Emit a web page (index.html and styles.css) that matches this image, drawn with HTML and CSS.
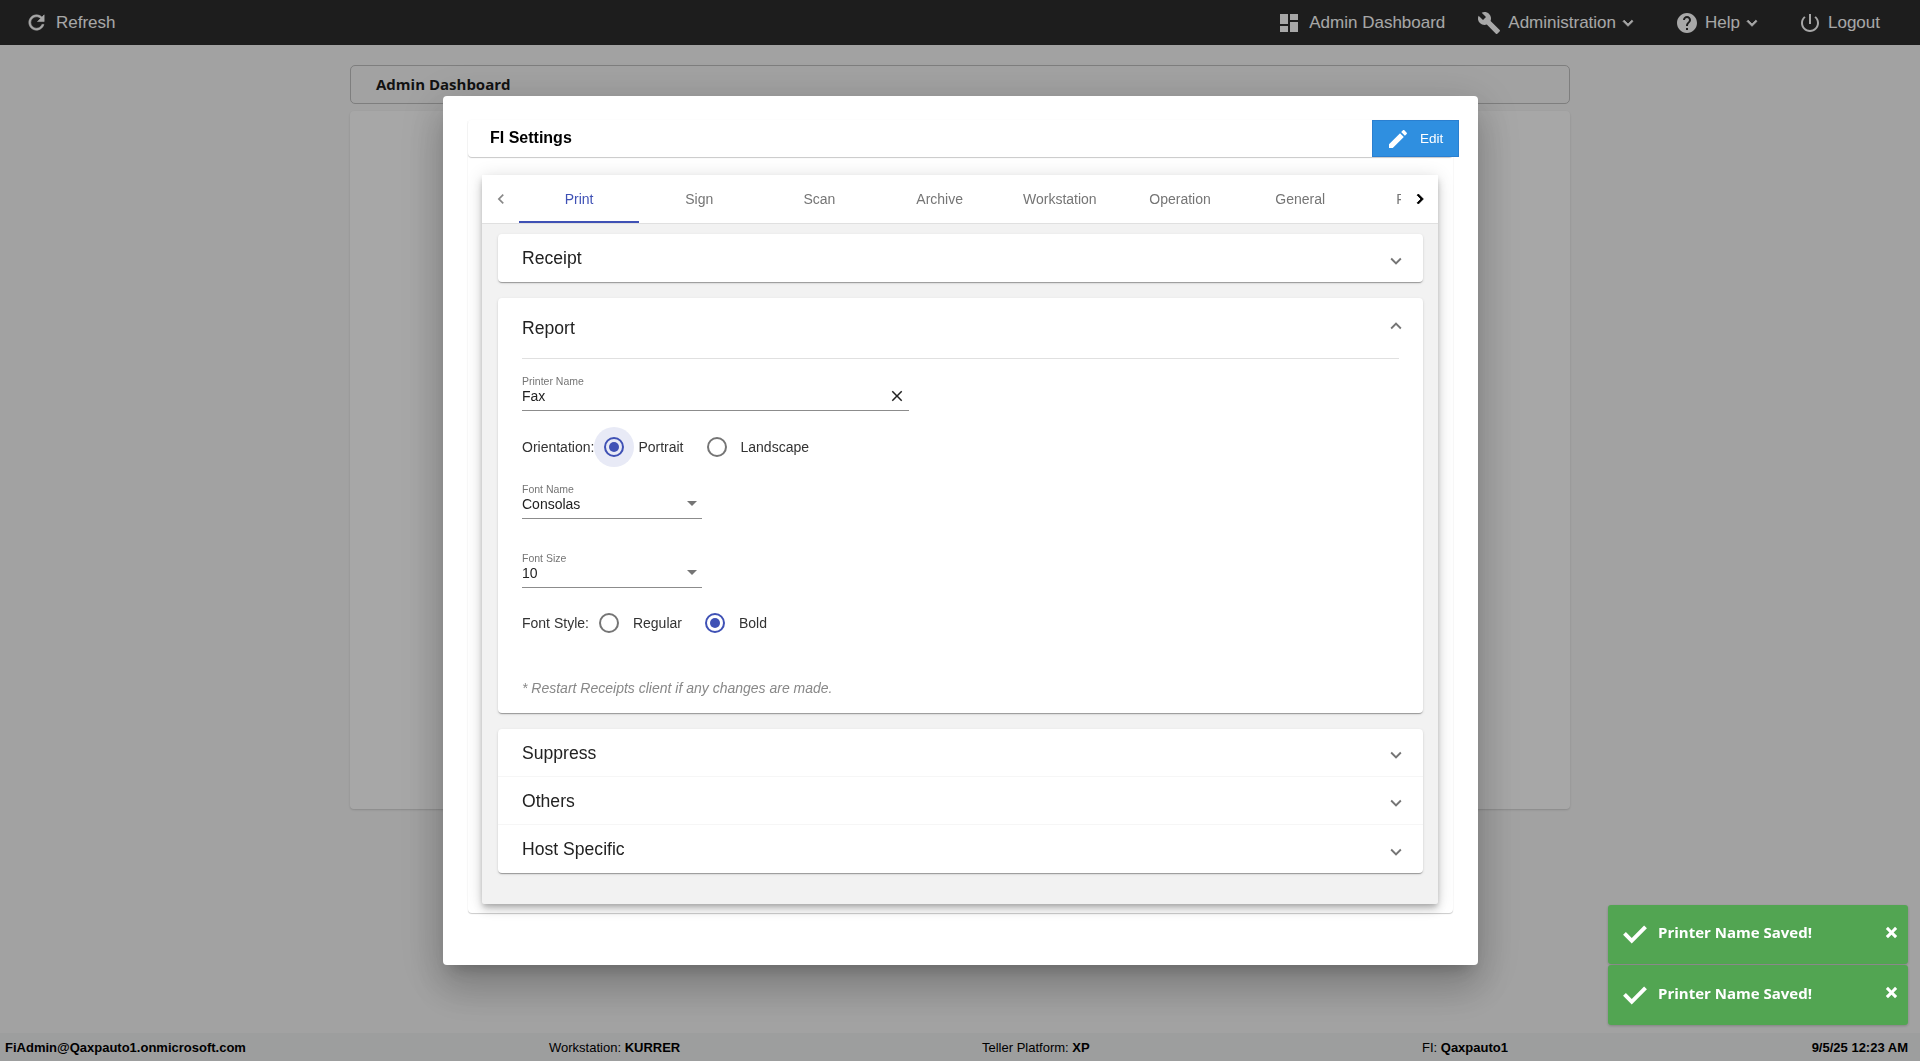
FILE: index.html
```html
<!DOCTYPE html>
<html lang="en">
<head>
<meta charset="utf-8">
<title>Admin Dashboard</title>
<link rel="stylesheet" href="styles.css">
</head>
<body>
<svg class="sprite" aria-hidden="true">
  <symbol id="i-refresh" viewBox="0 0 24 24"><path d="M17.65 6.35C16.2 4.9 14.21 4 12 4c-4.42 0-7.99 3.58-7.99 8s3.57 8 7.99 8c3.73 0 6.84-2.55 7.73-6h-2.08c-.82 2.33-3.04 4-5.65 4-3.31 0-6-2.69-6-6s2.69-6 6-6c1.66 0 3.14.69 4.22 1.78L13 11h7V4l-2.35 2.35z"/></symbol>
  <symbol id="i-dash" viewBox="0 0 24 24"><path d="M3 13h8V3H3v10zm0 8h8v-6H3v6zm10 0h8V11h-8v10zm0-18v6h8V3h-8z"/></symbol>
  <symbol id="i-build" viewBox="0 0 24 24"><path d="M22.7 19l-9.1-9.1c.9-2.3.4-5-1.5-6.9-2-2-5-2.4-7.4-1.3L9 6 6 9 1.6 4.7C.4 7.1.9 10.1 2.9 12.1c1.9 1.9 4.6 2.4 6.9 1.5l9.1 9.1c.4.4 1 .4 1.4 0l2.3-2.3c.5-.4.5-1.1.1-1.4z"/></symbol>
  <symbol id="i-help" viewBox="0 0 24 24"><path d="M12 2C6.48 2 2 6.48 2 12s4.48 10 10 10 10-4.48 10-10S17.52 2 12 2zm1 17h-2v-2h2v2zm2.07-7.75l-.9.92C13.45 12.9 13 13.5 13 15h-2v-.5c0-1.1.45-2.1 1.17-2.83l1.24-1.26c.37-.36.59-.86.59-1.41 0-1.1-.9-2-2-2s-2 .9-2 2H8c0-2.21 1.79-4 4-4s4 1.79 4 4c0 .88-.36 1.68-.93 2.25z"/></symbol>
  <symbol id="i-power" viewBox="0 0 24 24"><path d="M13 3h-2v10h2V3zm4.83 2.17l-1.42 1.42C17.99 7.86 19 9.81 19 12c0 3.87-3.13 7-7 7s-7-3.13-7-7c0-2.19 1.01-4.14 2.58-5.42L6.17 5.17C4.23 6.82 3 9.26 3 12c0 4.97 4.03 9 9 9s9-4.03 9-9c0-2.74-1.23-5.18-3.17-6.83z"/></symbol>
  <symbol id="i-edit" viewBox="0 0 24 24"><path d="M3 17.25V21h3.75L17.81 9.94l-3.75-3.75L3 17.25zM20.71 7.04c.39-.39.39-1.02 0-1.41l-2.34-2.34c-.39-.39-1.02-.39-1.41 0l-1.83 1.83 3.75 3.75 1.83-1.83z"/></symbol>
  <symbol id="i-more" viewBox="0 0 24 24"><path d="M16.59 8.59L12 13.17 7.41 8.59 6 10l6 6 6-6z"/></symbol>
  <symbol id="i-less" viewBox="0 0 24 24"><path d="M12 8l-6 6 1.41 1.41L12 10.83l4.59 4.58L18 14z"/></symbol>
  <symbol id="i-left" viewBox="0 0 24 24"><path d="M15.41 7.41L14 6l-6 6 6 6 1.41-1.41L10.83 12z"/></symbol>
  <symbol id="i-right" viewBox="0 0 24 24"><path d="M10 6L8.59 7.41 13.17 12l-4.58 4.59L10 18l6-6z"/></symbol>
  <symbol id="i-close" viewBox="0 0 24 24"><path d="M19 6.41L17.59 5 12 10.59 6.41 5 5 6.41 10.59 12 5 17.59 6.41 19 12 13.41 17.59 19 19 17.59 13.41 12z"/></symbol>
  <symbol id="i-drop" viewBox="0 0 24 24"><path d="M7 10l5 5 5-5z"/></symbol>
  <symbol id="i-check" viewBox="0 0 24 24"><path d="M9 15.6L3.6 10.2 1 12.8l8 8L23 6.8 20.4 4.2z"/></symbol>
  <symbol id="i-x" viewBox="0 0 24 24"><path d="M20 7l-3-3-5 5-5-5-3 3 5 5-5 5 3 3 5-5 5 5 3-3-5-5z"/></symbol>
</svg>

<div class="page">
  <header class="navbar">
    <a class="nav-item nav-refresh"><svg class="nav-icon"><use href="#i-refresh"/></svg>Refresh</a>
    <nav class="nav-right">
      <a class="nav-item nav-admin"><svg class="nav-icon big"><use href="#i-dash"/></svg>Admin Dashboard</a>
      <a class="nav-item nav-tools"><svg class="nav-icon big"><use href="#i-build"/></svg>Administration<svg class="nav-caret"><use href="#i-more"/></svg></a>
      <a class="nav-item nav-help"><svg class="nav-icon big"><use href="#i-help"/></svg>Help<svg class="nav-caret"><use href="#i-more"/></svg></a>
      <a class="nav-item nav-logout"><svg class="nav-icon big"><use href="#i-power"/></svg>Logout</a>
    </nav>
  </header>

  <main class="content">
    <div class="crumb">Admin Dashboard</div>
    <div class="panel"></div>
  </main>

  <footer class="status">
    <span class="st-user"><b>FiAdmin@Qaxpauto1.onmicrosoft.com</b></span>
    <span class="st-ws">Workstation: <b>KURRER</b></span>
    <span class="st-tp">Teller Platform: <b>XP</b></span>
    <span class="st-fi">FI: <b>Qaxpauto1</b></span>
    <span class="st-date"><b>9/5/25 12:23 AM</b></span>
  </footer>
</div>

<div class="backdrop"></div>

<section class="modal">
  <div class="settings">
    <div class="settings-head">
      <h2 class="settings-title">FI Settings</h2>
      <button class="edit-btn"><svg class="edit-icon"><use href="#i-edit"/></svg>Edit</button>
    </div>
    <div class="tabs-paper">
      <div class="tabbar">
        <span class="tab-scroll left"><svg><use href="#i-left"/></svg></span>
        <div class="tab-list">
          <span class="tab active">Print</span>
          <span class="tab">Sign</span>
          <span class="tab">Scan</span>
          <span class="tab">Archive</span>
          <span class="tab">Workstation</span>
          <span class="tab">Operation</span>
          <span class="tab">General</span>
          <span class="tab">Printers</span>
        </div>
        <span class="tab-scroll right"><svg><use href="#i-right"/></svg></span>
      </div>
      <div class="tab-body">
        <div class="acc">
          <div class="acc-row"><span>Receipt</span><svg class="acc-chev"><use href="#i-more"/></svg></div>
        </div>
        <div class="acc acc-open">
          <div class="acc-head"><span>Report</span><svg class="acc-chev up"><use href="#i-less"/></svg></div>
          <div class="field field-printer">
            <label class="field-label">Printer Name</label>
            <div class="field-value"><span>Fax</span><svg class="field-clear"><use href="#i-close"/></svg></div>
          </div>
          <div class="radio-row row-orient">
            <span class="radio-label">Orientation:</span>
            <span class="radio on focus"></span><span class="radio-text t-portrait">Portrait</span>
            <span class="radio"></span><span class="radio-text">Landscape</span>
          </div>
          <div class="field field-select">
            <label class="field-label">Font Name</label>
            <div class="field-value"><span>Consolas</span><svg class="field-drop"><use href="#i-drop"/></svg></div>
          </div>
          <div class="field field-select second">
            <label class="field-label">Font Size</label>
            <div class="field-value"><span>10</span><svg class="field-drop"><use href="#i-drop"/></svg></div>
          </div>
          <div class="radio-row row-style">
            <span class="radio-label">Font Style:</span>
            <span class="radio"></span><span class="radio-text t-regular">Regular</span>
            <span class="radio on"></span><span class="radio-text">Bold</span>
          </div>
          <p class="note">* Restart Receipts client if any changes are made.</p>
        </div>
        <div class="acc acc-group">
          <div class="acc-row"><span>Suppress</span><svg class="acc-chev"><use href="#i-more"/></svg></div>
          <div class="acc-row"><span>Others</span><svg class="acc-chev"><use href="#i-more"/></svg></div>
          <div class="acc-row"><span>Host Specific</span><svg class="acc-chev"><use href="#i-more"/></svg></div>
        </div>
      </div>
    </div>
  </div>
</section>

<div class="toasts">
  <div class="toast"><svg class="toast-check"><use href="#i-check"/></svg><span class="toast-msg">Printer Name Saved!</span><svg class="toast-x"><use href="#i-x"/></svg></div>
  <div class="toast"><svg class="toast-check"><use href="#i-check"/></svg><span class="toast-msg">Printer Name Saved!</span><svg class="toast-x"><use href="#i-x"/></svg></div>
</div>
</body>
</html>
```
FILE: styles.css
```css
* { box-sizing: border-box; }
html, body { margin: 0; height: 100%; overflow: hidden; }
body { font-family: "Liberation Sans", Arial, sans-serif; background: #f7f7f7; color: #222; }
.sprite { display: none; }
svg { fill: currentColor; display: block; flex: none; }

.page { height: 1061px; display: flex; flex-direction: column; }

.navbar { height: 45px; flex: none; background: #2d2d2d; color: #fff; display: flex; align-items: center; justify-content: space-between; padding: 0 40px 0 25px; }
.nav-right { display: flex; align-items: center; }
.nav-item { display: flex; align-items: center; font-size: 17px; white-space: nowrap; }
.nav-icon { width: 23px; height: 23px; margin-right: 8px; }
.nav-refresh .nav-icon { stroke: currentColor; stroke-width: .6; }
.nav-icon.big { width: 24px; height: 24px; margin-right: 6px; }
.nav-admin .nav-icon.big { margin-right: 8px; }
.nav-tools .nav-icon.big { margin-right: 7px; }
.nav-caret { width: 20px; height: 20px; margin-left: 2px; stroke: currentColor; stroke-width: 1; }
.nav-admin { margin-right: 32px; }
.nav-tools { margin-right: 37px; }
.nav-help { margin-right: 36px; }

.content { flex: 1; width: 1220px; margin: 20px auto 0; }
.crumb { height: 39px; background: #f7f7f7; border: 1px solid #c0c0c0; border-radius: 5px; font-weight: 700; font-size: 15px; font-family: "Open Sans", sans-serif; color: #1c1c1c; padding: 8px 25px 0; }
.panel { height: 698px; margin-top: 7px; background: #ffffff; border-radius: 4px; box-shadow: 0 1px 2px rgba(0,0,0,.15); }

.status { height: 28px; flex: none; position: relative; display: flex; align-items: center; font-size: 13px; color: #000; padding: 0 12px 0 5px; background: #f0f1f2; }
.status b { font-weight: 700; }
.st-user { width: 544px; }
.st-ws { width: 433px; }
.st-tp { width: 440px; }
.st-fi { flex: 1; }

.backdrop { position: fixed; inset: 0; background: rgba(0,0,0,.345); }

.modal { position: fixed; left: 443px; top: 96px; width: 1035px; height: 869px; background: #fff; border-radius: 4px; padding: 24px 25px 52px; box-shadow: 0 11px 15px -7px rgba(0,0,0,.2), 0 24px 38px 3px rgba(0,0,0,.14), 0 9px 46px 8px rgba(0,0,0,.12); }
.settings { height: 793px; border-radius: 4px; box-shadow: 0 1px 1px rgba(0,0,0,.2), 0 0 2px rgba(0,0,0,.04); display: flex; flex-direction: column; }
.settings-head { height: 37px; flex: none; display: flex; align-items: center; justify-content: space-between; padding-left: 22px; border-radius: 0 0 4px 4px; box-shadow: 0 1px 1px rgba(0,0,0,.22); margin-bottom: 18px; }
.settings-title { margin: 0 0 2px; font-size: 16px; font-weight: 700; color: #000; }
.edit-btn { width: 87px; height: 37px; margin-right: -6px; border: 1px solid #2a7fd0; background: #2f8fe0; color: #fff; font: 13.5px "Liberation Sans", Arial, sans-serif; display: flex; align-items: center; padding: 0 0 0 13px; }
.edit-icon { width: 24px; height: 24px; margin-right: 10px; }

.tabs-paper { width: 956px; height: 729px; margin-left: 14px; background: #f2f2f2; border-radius: 2px; box-shadow: 0 3px 5px -1px rgba(0,0,0,.2), 0 6px 10px 0 rgba(0,0,0,.14), 0 1px 18px 0 rgba(0,0,0,.12); display: flex; flex-direction: column; }
.tabbar { height: 49px; flex: none; display: flex; background: #fff; border-bottom: 1px solid #e0e0e0; }
.tab-scroll { width: 37px; display: flex; align-items: center; justify-content: center; color: #888; flex: none; }
.tab-scroll.right { width: 37px; color: #000; }
.tab-scroll.right svg { stroke: currentColor; stroke-width: 1; }
.tab-scroll svg { width: 20px; height: 20px; }
.tab-list { flex: 1; display: flex; overflow: hidden; }
.tab { width: 120.2px; flex: none; display: flex; align-items: center; justify-content: center; font-size: 14px; color: #757575; }
.tab.active { color: #3f51b5; border-bottom: 2px solid #3f51b5; padding-top: 2px; }

.tab-body { padding: 10px 15px 0 16px; }
.acc { background: #fff; border-radius: 4px; box-shadow: 0 2px 1px -1px rgba(0,0,0,.2), 0 1px 1px 0 rgba(0,0,0,.14), 0 1px 3px 0 rgba(0,0,0,.12); margin-bottom: 16px; }
.acc-row { height: 48px; display: flex; align-items: center; justify-content: space-between; padding: 0 16px 0 24px; font-size: 17.6px; color: #222; border-bottom: 1px solid #f6f6f6; }
.acc-row:last-child { border-bottom: 0; }
.acc-group .acc-row:not(:last-child) span { padding-top: 2px; }
.acc-chev { width: 22px; height: 22px; color: #757575; margin-top: 5px; }
.acc-chev.up { margin-top: -6px; }
.acc-open { height: 415px; padding: 0 24px; margin-bottom: 16px; }
.acc-head { height: 61px; display: flex; align-items: center; justify-content: space-between; margin-right: -8px; font-size: 17.6px; color: #222; position: relative; }
.acc-head::after { content: ""; position: absolute; left: 0; right: 8px; bottom: 0; height: 1px; background: #e0e0e0; }

.field { display: block; }
.field-label { display: block; font-size: 10.5px; color: #757575; line-height: 12px; }
.field-value { display: flex; align-items: flex-start; justify-content: space-between; font-size: 14px; color: #222; height: 24px; border-bottom: 1px solid #8c8c8c; line-height: 18px; }
.field-printer { width: 387px; margin-top: 16px; }
.field-clear { width: 18px; height: 18px; color: #222; margin-right: 3px; }
.field-select { width: 180px; margin-top: 26px; }
.field-select.second { margin-top: 33px; }
.field-drop { width: 24px; height: 24px; color: #757575; margin: -4px -2px 0 0; }

.radio-row { display: flex; align-items: center; height: 20px; font-size: 14px; color: #333; }
.row-orient { margin-top: 26px; }
.row-style { margin-top: 25px; }
.radio-label { margin-right: 5px; }
.radio { width: 20px; height: 20px; border-radius: 50%; border: 2px solid #757575; flex: none; position: relative; margin: 0 5px; }
.radio.on { border-color: #3f51b5; }
.radio.on::before { content: ""; position: absolute; inset: 3px; border-radius: 50%; background: #3f51b5; }
.radio.focus::after { content: ""; position: absolute; inset: -12px; border-radius: 50%; background: rgba(63,81,181,.12); }
.radio-text { margin-left: 9px; margin-right: 18px; }
.note { margin: 47px 0 0; font-size: 14px; font-style: italic; color: #888; }

.toasts { position: fixed; left: 1608px; top: 905px; width: 300px; display: flex; flex-direction: column; gap: 1px; }
.toast { height: 59px; background: #52a552; border-radius: 3px; color: #fff; display: flex; align-items: center; padding: 0 8px 0 14px; box-shadow: 0 1px 3px rgba(0,0,0,.2); }
.toast:last-child { height: 60px; }
.toast-check { width: 26px; height: 26px; margin-right: 10px; margin-top: -1px; }
.toast-msg { flex: 1; font: 700 15px "Open Sans", sans-serif; margin-top: -5px; }
.toast-x { width: 17px; height: 17px; margin-top: -5px; }
```
